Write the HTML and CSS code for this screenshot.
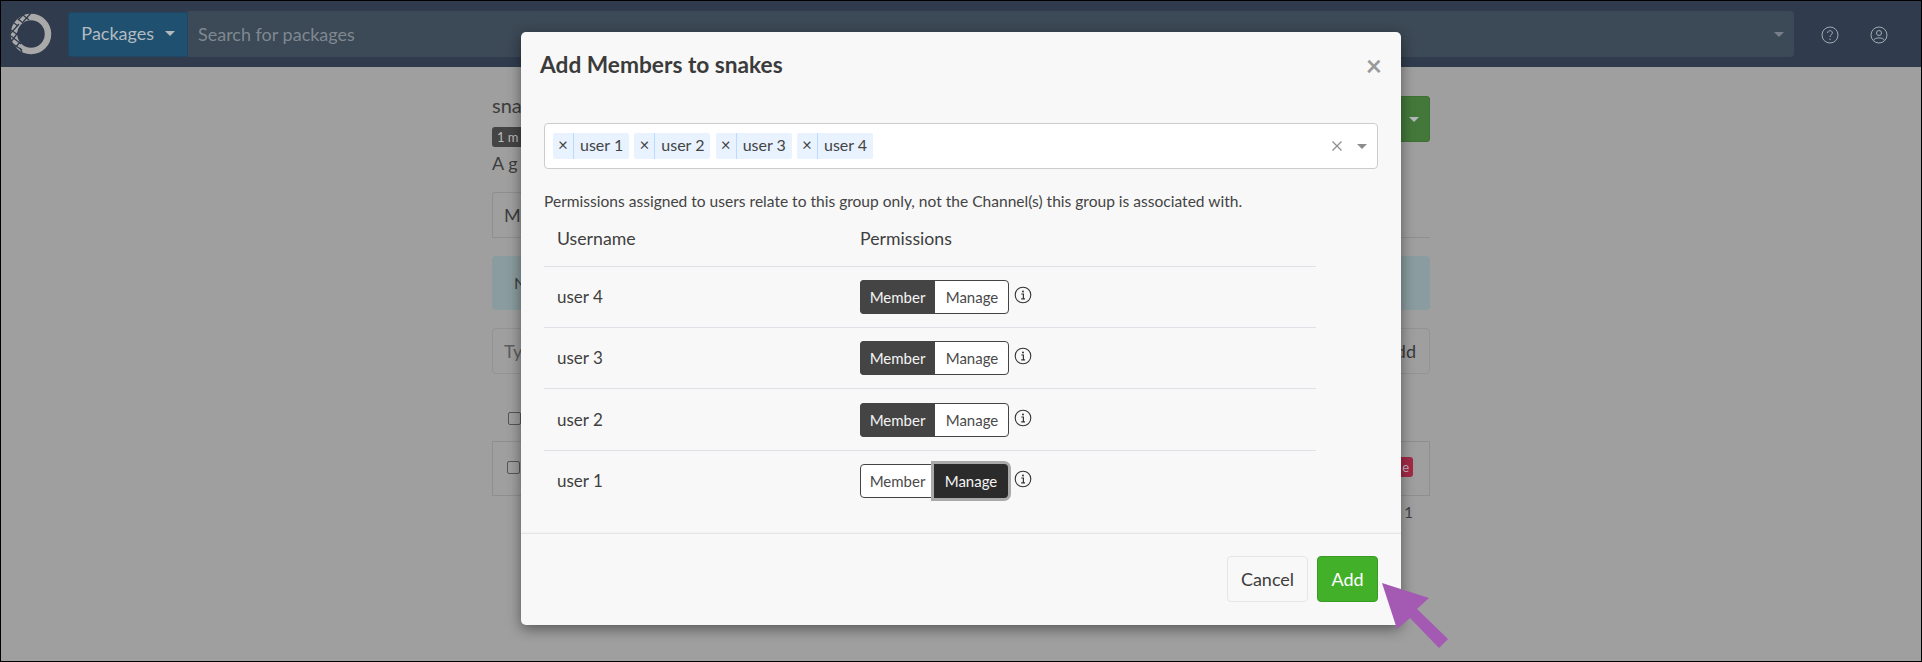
FILE: index.html
```html
<!DOCTYPE html>
<html lang="en">
<head>
<meta charset="utf-8">
<title>Add Members to snakes</title>
<link rel="stylesheet" href="styles.css">
</head>
<body>
<div class="frame">
  <header class="nav">
    <svg class="logo" viewBox="0 0 44 44" width="44" height="44" aria-hidden="true">
      <circle cx="22" cy="22" r="17" fill="none" stroke="#a9a9a9" stroke-width="6.5"/>
      <g stroke="#303c4e" stroke-width="1.3" fill="none">
        <path d="M1 30 L13 38M2 24 L12 32M2 18 L9 23M5 11 L9 14M9 7 L14 11M14 3 L20 8"/>
        <path d="M1 22 L10 12M2 30 L13 15M6 36 L11 30M13 40 L11 36M9 8 L15 2M14 10 L22 1"/>
      </g>
    </svg>
    <button class="nav-pick">Packages <span class="caret caret-light"></span></button>
    <div class="search">
      <span class="search-hint">Search for packages</span>
      <span class="caret caret-dim"></span>
    </div>
    <svg class="nav-icon nav-help" viewBox="0 0 18 18" width="18" height="18" aria-hidden="true">
      <circle cx="9" cy="9" r="8" fill="none" stroke="#a3a9b0" stroke-width="1"/>
      <path d="M6.6 7 C6.6 3.9 11.4 3.9 11.4 6.9 C11.4 8.8 9 8.7 9 11" fill="none" stroke="#a3a9b0" stroke-width="1"/>
      <circle cx="9" cy="13.2" r=".7" fill="#a3a9b0"/>
    </svg>
    <svg class="nav-icon" viewBox="0 0 18 18" width="18" height="18" aria-hidden="true">
      <circle cx="9" cy="9" r="8" fill="none" stroke="#a3a9b0" stroke-width="1"/>
      <circle cx="9" cy="7" r="2.5" fill="none" stroke="#a3a9b0" stroke-width="1"/>
      <path d="M3.6 14.6 C4 11 14 11 14.4 14.6" fill="none" stroke="#a3a9b0" stroke-width="1"/>
    </svg>
  </header>

  <main class="page">
    <div class="page-head">
      <div class="page-title">
        <h1 class="group-name">sna</h1>
        <span class="count">1 m</span>
        <p class="group-desc">A g</p>
      </div>
      <button class="green-drop"><span class="caret caret-light"></span></button>
    </div>
    <div class="tabs"><span class="tab">Me</span></div>
    <div class="notice">N</div>
    <div class="add-row">
      <span class="add-input">Ty</span>
      <span class="add-btn">dd</span>
    </div>
    <div class="list-head"><span class="check"></span></div>
    <div class="list-row">
      <span class="check"></span>
      <span class="danger">e</span>
    </div>
    <div class="pager">1</div>
  </main>

  <section class="modal">
    <div class="modal-head">
      <h2 class="modal-title">Add Members to snakes</h2>
      <span class="modal-close">×</span>
    </div>
    <div class="modal-body">
      <div class="picker">
        <span class="chip"><span class="chip-x">×</span><span class="chip-label">user 1</span></span>
        <span class="chip"><span class="chip-x">×</span><span class="chip-label">user 2</span></span>
        <span class="chip"><span class="chip-x">×</span><span class="chip-label">user 3</span></span>
        <span class="chip"><span class="chip-x">×</span><span class="chip-label">user 4</span></span>
        <span class="picker-end">
          <svg viewBox="0 0 12 12" width="12" height="12" aria-hidden="true"><path d="M1.5 1.5 L10.5 10.5M10.5 1.5 L1.5 10.5" stroke="#8c8c8c" stroke-width="1.2"/></svg>
          <span class="caret caret-grey"></span>
        </span>
      </div>
      <p class="help">Permissions assigned to users relate to this group only, not the Channel(s) this group is associated with.</p>
      <div class="perm-table">
        <div class="perm-row perm-header"><span>Username</span><span>Permissions</span></div>
        <div class="perm-row">
          <span>user 4</span>
          <span class="perm-cell"><span class="toggle"><span class="opt opt-on">Member</span><span class="opt">Manage</span></span>
            <svg class="info" viewBox="0 0 18 18" width="18" height="18" aria-hidden="true"><circle cx="9" cy="9" r="7.8" fill="none" stroke="#333" stroke-width="1.1"/><circle cx="9" cy="5.4" r="1" fill="#333"/><path d="M7.3 8 H9.4 V12.6 M7.2 12.8 H11" fill="none" stroke="#333" stroke-width="1.2"/></svg></span>
        </div>
        <div class="perm-row">
          <span>user 3</span>
          <span class="perm-cell"><span class="toggle"><span class="opt opt-on">Member</span><span class="opt">Manage</span></span>
            <svg class="info" viewBox="0 0 18 18" width="18" height="18" aria-hidden="true"><circle cx="9" cy="9" r="7.8" fill="none" stroke="#333" stroke-width="1.1"/><circle cx="9" cy="5.4" r="1" fill="#333"/><path d="M7.3 8 H9.4 V12.6 M7.2 12.8 H11" fill="none" stroke="#333" stroke-width="1.2"/></svg></span>
        </div>
        <div class="perm-row perm-row-tall">
          <span>user 2</span>
          <span class="perm-cell"><span class="toggle"><span class="opt opt-on">Member</span><span class="opt">Manage</span></span>
            <svg class="info" viewBox="0 0 18 18" width="18" height="18" aria-hidden="true"><circle cx="9" cy="9" r="7.8" fill="none" stroke="#333" stroke-width="1.1"/><circle cx="9" cy="5.4" r="1" fill="#333"/><path d="M7.3 8 H9.4 V12.6 M7.2 12.8 H11" fill="none" stroke="#333" stroke-width="1.2"/></svg></span>
        </div>
        <div class="perm-row perm-row-last">
          <span>user 1</span>
          <span class="perm-cell"><span class="toggle"><span class="opt">Member</span><span class="opt opt-focus">Manage</span></span>
            <svg class="info" viewBox="0 0 18 18" width="18" height="18" aria-hidden="true"><circle cx="9" cy="9" r="7.8" fill="none" stroke="#333" stroke-width="1.1"/><circle cx="9" cy="5.4" r="1" fill="#333"/><path d="M7.3 8 H9.4 V12.6 M7.2 12.8 H11" fill="none" stroke="#333" stroke-width="1.2"/></svg></span>
        </div>
      </div>
    </div>
    <div class="modal-foot">
      <button class="btn btn-cancel">Cancel</button>
      <button class="btn btn-add">Add</button>
    </div>
  </section>

  <svg class="pointer" viewBox="0 0 80 80" width="80" height="80" aria-hidden="true">
    <polygon points="1,3 48,18 36,29 67,59 58,68 29,38 16,49" fill="#a45ab3"/>
  </svg>
</div>
</body>
</html>
```

FILE: styles.css
```css
* { box-sizing: border-box; }
html, body { margin: 0; padding: 0; }
body {
  width: 1922px;
  height: 662px;
  overflow: hidden;
  font-family: "Lato", "Noto Sans", sans-serif;
  color: #3a3a3a;
}
button { font: inherit; }
h1, h2, p { margin: 0; font-weight: normal; }

.frame {
  position: relative;
  width: 1922px;
  height: 662px;
  border: 1px solid #000;
  background: #9f9f9f;
  overflow: hidden;
}

/* carets */
.caret {
  display: inline-block;
  width: 0;
  height: 0;
  border-left: 5px solid transparent;
  border-right: 5px solid transparent;
  border-top: 5px solid currentColor;
  vertical-align: middle;
}
.caret-light { color: #b4b9bd; }
.caret-dim { color: #77808a; }
.caret-grey { color: #8c8c8c; }

/* navbar */
.nav {
  display: flex;
  align-items: center;
  height: 66px;
  background: #303c4e;
  padding-left: 8px;
}
.logo { flex: none; }
.nav-pick {
  flex: none;
  width: 120px;
  height: 45px;
  margin-left: 15px;
  border: 1px solid #1f4763;
  border-radius: 3px 0 0 3px;
  background: #20506f;
  color: #b2bbc2;
  font-size: 18px;
  padding: 0 0 2px;
}
.nav-pick .caret { margin-left: 6px; margin-bottom: 3px; }
.search {
  flex: none;
  display: flex;
  align-items: center;
  justify-content: space-between;
  width: 1606px;
  height: 46px;
  padding: 0 10px 0 10px;
  background: #3c4956;
  border-radius: 0 4px 4px 0;
  font-size: 18px;
}
.search-hint { color: #7f8891; }
.nav-icon { flex: none; margin-top: 2px; }
.nav-help { margin-left: 27px; margin-right: 31px; }

/* dimmed page behind the dialog */
.page {
  width: 938px;
  margin-left: 491px;
  color: #3d3d3d;
}
.page-head {
  display: flex;
  justify-content: space-between;
  align-items: flex-start;
  height: 125px;
  padding-top: 29px;
}
.page-title { margin-top: -3px; }
.group-name { font-size: 20px; line-height: 24px; }
.count {
  display: block;
  width: 60px;
  margin-top: 10px;
  padding: 0 5px;
  height: 20px;
  line-height: 20px;
  font-size: 13px;
  border-radius: 3px;
  background: #444;
  color: #bbb;
}
.group-desc { font-size: 18px; line-height: 24px; margin-top: 4px; }
.green-drop {
  width: 60px;
  height: 46px;
  border: 1px solid #3e7034;
  border-radius: 3px;
  background: #44783a;
  text-align: right;
  padding: 0 10px 4px 0;
}
.tabs {
  height: 46px;
  border-bottom: 1px solid #8f8f8f;
}
.tab {
  display: inline-block;
  width: 60px;
  height: 46px;
  line-height: 44px;
  padding: 0 11px;
  font-size: 18px;
  border: 1px solid #8f8f8f;
  border-bottom: 0;
  border-radius: 3px 3px 0 0;
}
.notice {
  margin-top: 18px;
  height: 54px;
  line-height: 54px;
  padding-left: 22px;
  background: #8a9c9f;
  border-radius: 4px;
}
.add-row {
  display: flex;
  justify-content: space-between;
  margin-top: 18px;
  height: 46px;
  line-height: 44px;
  font-size: 18px;
  border: 1px solid #939393;
  border-radius: 4px;
  padding: 0 13px 0 11px;
  color: #5c5c5c;
}
.add-btn { color: #3a3a3a; }
.list-head { height: 67px; padding: 35px 0 0 16px; }
.check {
  display: inline-block;
  width: 13px;
  height: 13px;
  border: 1px solid #555;
  border-radius: 2px;
}
.list-row {
  display: flex;
  justify-content: space-between;
  align-items: center;
  height: 55px;
  padding: 0 16px 3px 14px;
  border: 1px solid #8f8f8f;
}
.danger {
  width: 40px;
  height: 20px;
  line-height: 20px;
  padding-right: 4px;
  text-align: right;
  font-size: 13px;
  background: #a32a47;
  color: #c9b7bd;
  border-radius: 3px;
}
.pager { text-align: right; padding: 7px 17px 0 0; font-size: 15px; }

/* dialog */
.modal {
  position: absolute;
  left: 520px;
  top: 31px;
  width: 880px;
  height: 593px;
  display: flex;
  flex-direction: column;
  background: #f8f8f8;
  border-radius: 5px;
  box-shadow: 0 4px 14px rgba(0, 0, 0, .45);
}
.modal-head {
  display: flex;
  justify-content: space-between;
  align-items: center;
  height: 68px;
  padding: 0 19px 3px 19px;
}
.modal-title {
  font-size: 22.7px;
  font-weight: 700;
  color: #3b3b3b;
}
.modal-close {
  font-size: 28px;
  font-weight: 700;
  line-height: 28px;
  color: #9a9a9a;
}
.modal-body {
  flex: 1;
  padding: 23px 23px 0 23px;
}
.picker {
  display: flex;
  align-items: center;
  height: 46px;
  padding: 0 8px;
  gap: 5.33px;
  background: #fff;
  border: 1px solid #ccc;
  border-radius: 4px;
}
.chip {
  display: flex;
  height: 26px;
  line-height: 24px;
  background: #e9f3ff;
  border-radius: 2px;
  font-size: 16px;
  color: #444;
}
.chip-x {
  width: 21px;
  text-align: center;
  border-right: 1px solid #b8dbff;
  font-size: 17px;
}
.chip-label { width: 55px; padding-left: 6px; }
.picker-end {
  display: flex;
  align-items: center;
  gap: 14px;
  margin-left: auto;
  padding-right: 2px;
}
.help {
  margin-top: 21px;
  height: 22px;
  line-height: 22px;
  font-size: 15.55px;
  color: #444;
}
.perm-table { width: 772px; font-size: 17px; color: #3f3f3f; }
.perm-row {
  display: grid;
  grid-template-columns: 303px 1fr;
  align-items: center;
  padding: 13px 0 13px 13px;
  border-bottom: 1px solid #e0e0e6;
}
.perm-row > span:first-child { margin-top: -2px; }
.perm-header { height: 55px; padding-top: 27px; padding-bottom: 0; align-items: start; font-size: 17.7px; }
.perm-header span { display: block; line-height: 0; }
.perm-header > span:first-child { margin-top: 0; }
.perm-row-tall { padding-top: 14px; }
.perm-row-last { border-bottom: 0; }
.perm-cell { display: flex; align-items: center; gap: 5px; }
.info { margin-top: -5px; }
.toggle {
  display: flex;
  width: 149px;
  height: 34px;
  border: 1px solid #444;
  border-radius: 4px;
  font-size: 15px;
  line-height: 32px;
  background: #fff;
}
.opt {
  flex: none;
  text-align: center;
  color: #4a4a4a;
  width: 73px;
}
.opt:last-child { width: 74px; }
.opt-on {
  background: #444;
  color: #f4f4f4;
  margin: -1px 0 -1px -1px;
  width: 75px;
  line-height: 34px;
  border-radius: 4px 0 0 4px;
}
.opt-focus {
  background: #2b2b2b;
  color: #f4f4f4;
  margin: -1px -1px -1px 0;
  width: 75px;
  line-height: 34px;
  border-radius: 0 4px 4px 0;
  box-shadow: 0 0 0 3px #a9a9a9;
}
.modal-foot {
  display: flex;
  justify-content: flex-end;
  gap: 9px;
  height: 92px;
  padding: 22px 23px 24px 0;
  border-top: 1px solid #e4e4e4;
  box-shadow: 0 -1px 2px rgba(0, 0, 0, .03);
}
.btn {
  height: 46px;
  border-radius: 4px;
  font-size: 18px;
}
.btn-cancel {
  width: 81px;
  background: #f8f8f8;
  border: 1px solid #e6e6e6;
  color: #3d3d3d;
}
.btn-add {
  width: 61px;
  background: #43b02a;
  border: 1px solid #3a9b24;
  color: #fff;
}

/* annotation arrow */
.pointer {
  position: absolute;
  left: 1380px;
  top: 579px;
}
```
